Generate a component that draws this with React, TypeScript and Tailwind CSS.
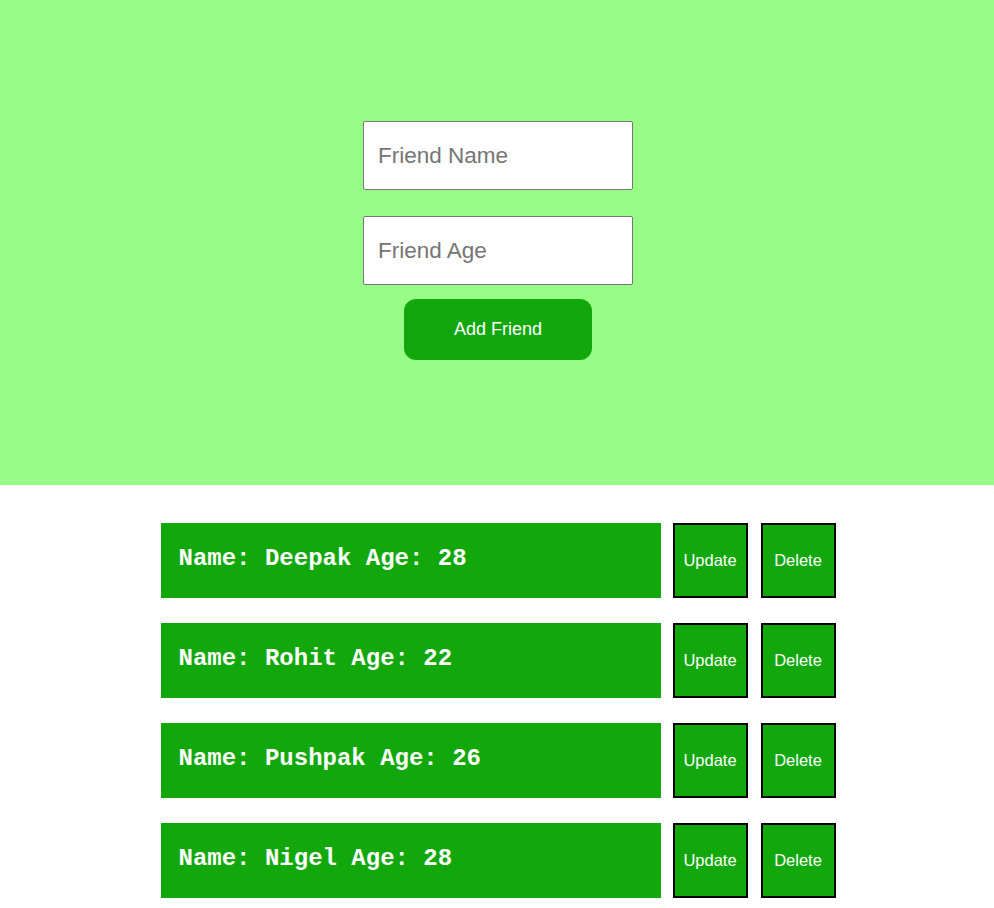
const FRIENDS = [
  { name: 'Deepak', age: 28 },
  { name: 'Rohit', age: 22 },
  { name: 'Pushpak', age: 26 },
  { name: 'Nigel', age: 28 },
];

export default function App() {
  return (
    <div className="min-h-[908px] bg-white pl-[2px] font-['Liberation_Sans',Arial,sans-serif]">
      {/* Form */}
      <div className="-ml-[2px] flex h-[485px] flex-col items-center bg-[#98fd86] pt-[121px] pl-[2px]">
        <input
          placeholder="Friend Name"
          className="h-[69px] w-[270px] rounded-[2px] border border-[#767676] bg-white px-[14px] text-[22.5px] text-black outline-none placeholder:text-[#757575]"
        />
        <input
          placeholder="Friend Age"
          className="mt-[26px] h-[69px] w-[270px] rounded-[2px] border border-[#767676] bg-white px-[14px] text-[22.5px] text-black outline-none placeholder:text-[#757575]"
        />
        <button className="mt-[14px] h-[61px] w-[188px] rounded-[12px] bg-[#12a80c] text-[18px] text-white">
          Add Friend
        </button>
      </div>

      {/* List */}
      <div className="flex flex-col items-center gap-[25px] pt-[38px] pb-[10px]">
        {FRIENDS.map((f) => (
          <div key={f.name} className="flex h-[75px] w-[675px] items-center">
            <div className="flex h-full w-[500px] items-center bg-[#12a80c] pb-[3px] pl-[18px] font-['Liberation_Mono','Courier_New',monospace] text-[24px] font-bold text-white">
              Name: {f.name} Age: {f.age}
            </div>
            <button className="ml-[12px] h-[75px] w-[75px] border-2 border-black bg-[#12a80c] pb-px text-[16.5px] text-white">
              Update
            </button>
            <button className="ml-[13px] h-[75px] w-[75px] border-2 border-black bg-[#12a80c] pb-px text-[16.5px] text-white">
              Delete
            </button>
          </div>
        ))}
      </div>
    </div>
  );
}
